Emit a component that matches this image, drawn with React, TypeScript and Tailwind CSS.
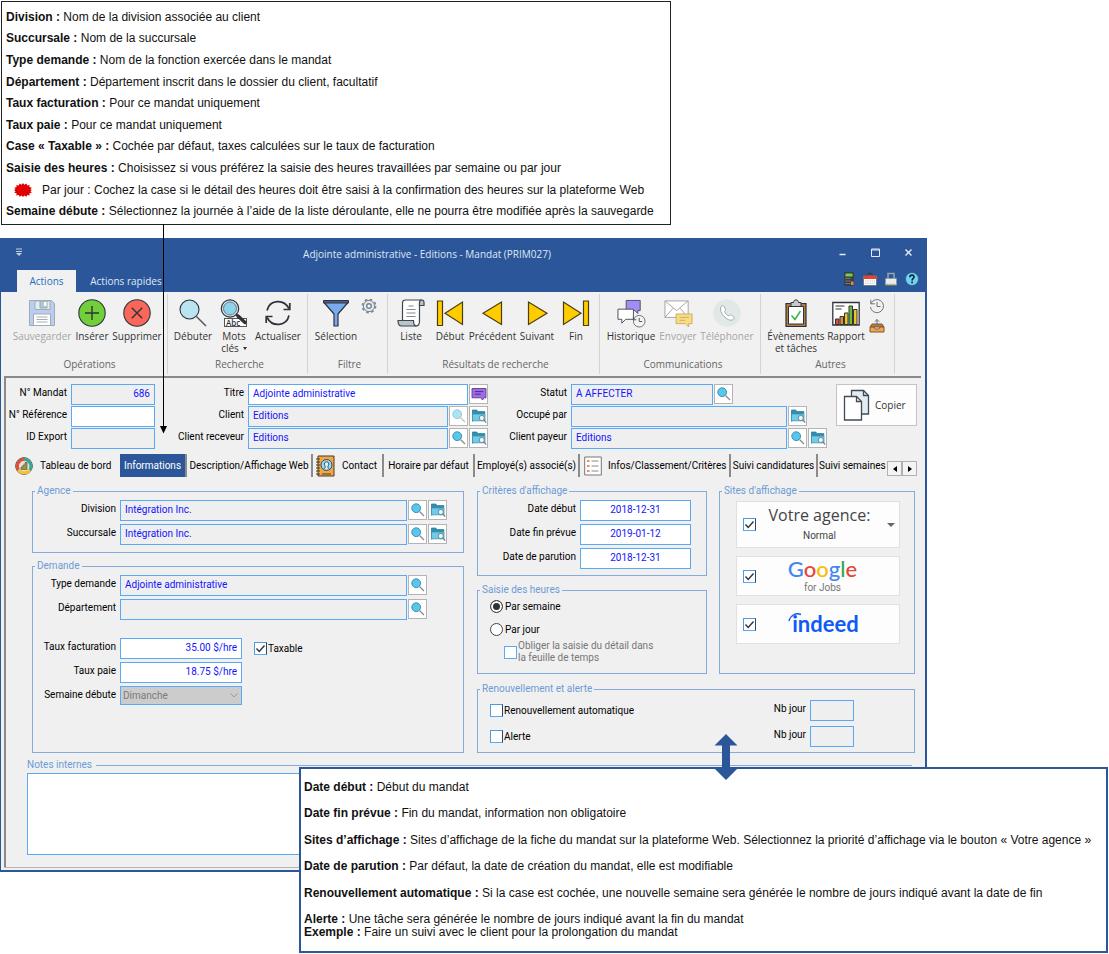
import React, { ReactNode } from "react";

/* ---------- Small icons ---------- */

function SearchIcon({ faded = false }: { faded?: boolean }) {
  return (
    <svg viewBox="0 0 16 16" className="size-4" fill="none" opacity={faded ? 0.5 : 1}>
      <path d="M9.5 9.5 14 14" stroke="#8a8a8a" strokeWidth="1.3" />
      <circle cx="6.2" cy="6.2" r="4.4" fill="#56c8ee" stroke="#4a8cab" strokeWidth="1" />
    </svg>
  );
}

function FolderIcon() {
  return (
    <svg viewBox="0 0 16 16" className="size-4" fill="none">
      <path d="M1.5 13.5V2h4.3l1 1.6h7v2.2" fill="#2f8fb0" stroke="#2b7f9c" strokeWidth=".8" />
      <path d="M1.5 12.8V6h12.5v6.8z" fill="#6fcdea" stroke="#3f93b0" strokeWidth=".8" />
      <circle cx="10.8" cy="10" r="2.6" fill="#e9f6fb" stroke="#6d7f88" strokeWidth=".9" />
      <path d="M12.7 11.900 15.200 14.600" stroke="#6d7f88" strokeWidth="1.2" />
    </svg>
  );
}

function ChatIcon() {
  return (
    <svg viewBox="0 0 16 16" className="size-4" fill="none">
      <path d="M1 2.5h14v9.3h-2L11.500 14 9.800 11.8H1z" fill="#a06be6" stroke="#5f3e94" strokeWidth=".9" />
      <path d="M3.8 5.6h8.4M3.8 8.2h6" stroke="#4c2f7c" strokeWidth="1" />
    </svg>
  );
}

/* ---------- Ribbon icons ---------- */

const ink = "#2f3338";

function SaveIcon() {
  return (
    <svg viewBox="0 0 28 28" className="size-7" fill="none">
      <path d="M1.5 1.5h22l3 3v22h-25z" fill="#b9cdf0" stroke="#a3aab5" />
      <path d="M7 2h15v8.5H7z" fill="#dff0f2" stroke="#a3aab5" />
      <path d="M12 2h7v7h-7z" fill="#a9cbd0" stroke="#a3aab5" />
      <rect x="16" y="3" width="2.5" height="4" fill="#fff" />
      <path d="M5.5 15h17v11.5h-17z" fill="#fff" stroke="#a3aab5" />
      <path d="M8.500 18h11M8.500 20.500h11M8.500 23h11" stroke="#a9adb3" />
    </svg>
  );
}

function RoundIcon({ kind }: { kind: "add" | "remove" }) {
  return (
    <svg viewBox="0 0 28 28" className="size-7" fill="none" stroke={ink} strokeWidth="1.1">
      <circle cx="14" cy="14" r="13.2" fill={kind === "add" ? "#71cf3a" : "#f7685b"} />
      {kind === "add" ? <path d="M14 7v14M7 14h14" strokeWidth="1.4" /> : <path d="m8.800 8.800 10.400 10.400M19.200 8.800 8.800 19.200" strokeWidth="1.4" />}
    </svg>
  );
}

function LookupIcon() {
  return (
    <svg viewBox="0 0 28 28" className="size-7" fill="none" stroke={ink}>
      <circle cx="10.500" cy="10.500" r="9.500" fill="#b9e4f0" strokeWidth="1.1" />
      <path d="m17.500 17.500 9.500 9.500" stroke="#4d5a66" strokeWidth="1.500" />
    </svg>
  );
}

function KeywordIcon() {
  return (
    <svg viewBox="0 0 28 28" className="size-7" fill="none" stroke={ink}>
      <circle cx="10" cy="9.500" r="8.700" fill="#dfe6ea" strokeWidth="1.200" />
      <circle cx="10" cy="9.500" r="6.500" fill="#8fd3ea" stroke="#5b7f92" />
      <path d="m16 15 3 3" strokeWidth="2" />
      <rect x="4.500" y="19.500" width="22" height="8" fill="#fff" stroke="#555" />
      <text x="6" y="26.800" fontSize="8" fontFamily="Open Sans, sans-serif" fontWeight="600" fill={ink} stroke="none">Abc</text>
      <path d="m18 17 7 6.500" strokeWidth="3.500" strokeLinecap="round" />
    </svg>
  );
}

function RefreshIcon() {
  return (
    <svg viewBox="0 0 28 28" className="size-7" fill="none" stroke={ink} strokeWidth="1.700">
      <path d="M3 11.500C5.500 .8 19.500-.8 25 9.500M25 16.500c-2.500 10.700-16.500 12.300-22 2" />
      <path d="M25.800 4v6.500h-6.300M2.200 24v-6.500h6.300" />
    </svg>
  );
}

function FunnelIcon() {
  return (
    <svg viewBox="0 0 28 28" className="size-7" fill="none" stroke={ink} strokeLinejoin="round">
      <path d="M2 3.500 12 15v12h4V15L26 3.500z" fill="#78aaf2" strokeWidth="1.200" />
      <path d="M1.500 1.500h25V4h-25z" fill="#4a6187" />
    </svg>
  );
}

function GearIcon() {
  return (
    <svg viewBox="0 0 16 16" className="size-4" fill="none" stroke="#7b868e">
      <circle cx="8" cy="8" r="6.500" strokeWidth="1.800" strokeDasharray="2.550 2.550" />
      <circle cx="8" cy="8" r="5.600" fill="#e3e9ec" />
      <circle cx="8" cy="8" r="2.300" fill="#f5f5f5" strokeWidth="1.500" />
    </svg>
  );
}

function ScrollIcon() {
  return (
    <svg viewBox="0 0 28 28" className="size-7" fill="none" stroke="#3d4850" strokeWidth="1.200">
      <path d="M5.500 21V4c0-2 1-3 3-3h16.500c-2 0-2.500 1-2.500 3v18c0 3-1 5-3.500 5z" fill="#fff" />
      <path d="M22.500 6.500H27V3.500c0-1.500-.8-2.500-2-2.500s-2.500 1-2.500 3z" fill="#b9c5cb" />
      <path d="M1 21.500h15.500c0 3 .5 5.500 3 5.500H4.500C2 27 1 25 1 21.500z" fill="#b9c5cb" />
      <path d="M11.500 7h5M9.500 10.500h9M9.500 14h9M9.500 17.500h9" stroke="#84898d" />
    </svg>
  );
}

function NavIcon({ kind }: { kind: "first" | "prev" | "next" | "last" }) {
  const flip = kind === "next" || kind === "last";
  const bar = kind === "first" || kind === "last";
  return (
    <svg viewBox="0 0 28 28" className="size-7" fill="#fc0" stroke="#4a3d10" strokeWidth="1.200">
      <g transform={flip ? "matrix(-1 0 0 1 28 0)" : undefined}>
        {bar && <path d="M1.500 2h5v24.500h-5z" />}
        <path d={bar ? "M9 14.200 26.500 3v22.500z" : "M4 14.200 22.500 3v22.500z"} />
      </g>
    </svg>
  );
}

function HistoryChatIcon() {
  return (
    <svg viewBox="0 0 30 30" className="size-[29px]" fill="none" stroke="#4b5158">
      <path d="M9.500 1.500H24V12h-2.500v3l-3-3h-9z" fill="#a58bf5" />
      <path d="M1 10.500h16V21H9l-4 4v-4H1z" fill="#fff" />
      <circle cx="23" cy="23" r="6" fill="#f4f4f4" stroke="#6c7278" />
      <path d="M23 19.500V23.300h3M17 18.500v3h3" />
    </svg>
  );
}

function MailIcon() {
  return (
    <svg viewBox="0 0 30 30" className="size-[29px]" fill="none" stroke="#a2a4a6">
      <path d="M1 2h24v17H1z" fill="#fff" />
      <path d="m1 2 12 10L25 2M1 19l8.500-9.500M25 19l-8.500-9.500" />
      <path d="M12.500 15.500H29v10h-3.500V29L22 25.500h-9.500z" fill="#fbdc86" stroke="#c8ad62" />
      <path d="M16 19h10M16 22h6" stroke="#c8ad62" />
    </svg>
  );
}

function PhoneIcon() {
  return (
    <svg viewBox="0 0 28 28" className="size-7" fill="none" stroke="#a5a8a8">
      <circle cx="14" cy="14" r="13.800" fill="#e1e9e8" stroke="none" />
      <path d="M8 7.500c1-1 2-1.500 3 0l1.500 2.500c.6 1-.3 1.700-1 2.300.5 2 2.500 4 4.400 4.600.700-.800 1.500-1.500 2.500-.8l2.200 1.700c1.200 1 .4 2.300-.7 3-4.900 2.700-14.800-7-11.900-13.300z" fill="#fff" />
    </svg>
  );
}

function ClipboardIcon() {
  return (
    <svg viewBox="0 0 28 28" className="size-7" fill="none" stroke={ink}>
      <path d="M4 4.500h20V27.500H4z" fill="#b07b40" strokeWidth="1.200" />
      <path d="M6.500 7.500h15v17.500h-15z" fill="#fff" />
      <path d="M9 3.500h2.500c0-3.500 5-3.500 5 0H19v4H9z" fill="#c5c9cc" />
      <path d="m9.500 16.500 3.500 4L18.500 12" stroke="#28b540" strokeWidth="1.400" />
    </svg>
  );
}

function ReportIcon() {
  return (
    <svg viewBox="0 0 28 28" className="size-7" fill="none" stroke={ink}>
      <path d="M.8 3.500h26.400V26H.8z" fill="#fff" strokeWidth="1.300" />
      <path d="M3.500 7h9M3.500 10h6" />
      <path d="M3.500 20H7v5.500H3.500z" fill="#e14a34" />
      <path d="M8 17.500h3.500v8H8z" fill="#ee8a2c" />
      <path d="M12.500 14H16v11.500h-3.500z" fill="#edc526" />
      <path d="M17 7h3.500v18.500H17z" fill="#69bf38" />
      <path d="M21.500 10.500H25v15h-3.500z" fill="#edc526" />
    </svg>
  );
}

function ClockBackIcon() {
  return (
    <svg viewBox="0 0 16 16" className="size-4" fill="none" stroke="#6d7276">
      <path d="M2 5.500a6.500 6.500 0 1 1-.5 3.500" />
      <path d="M1.800 1.800v4h4M8 4v4.500h3.500" />
    </svg>
  );
}

function TrayIcon() {
  return (
    <svg viewBox="0 0 16 16" className="size-4" fill="none" stroke="#7a5a33">
      <path d="m1 9 2-3h10l2 3z" fill="#b9803f" />
      <path d="M8 9V1.500M5.800 3.700 8 1.500l2.200 2.200" stroke="#6d7276" />
      <path d="M1 9h4l1.200 2h3.600L11 9h4v5H1z" fill="#f3a64d" />
    </svg>
  );
}

/* ---------- Ribbon ---------- */

function Tool({ icon, label, label2, disabled, className }: { icon: ReactNode; label: string; label2?: ReactNode; disabled?: boolean; className: string }) {
  return (
    <button disabled={disabled} className={`flex shrink-0 flex-col items-center pt-[5px] leading-3 whitespace-nowrap text-[#333] disabled:text-[#a5a5a5] ${className}`}>
      <span className="flex h-7 items-start">{icon}</span>
      <span className="pt-[3px]">{label}</span>
      {label2 && <span className="flex items-center gap-1">{label2}</span>}
    </button>
  );
}

function Group({ name, className, children }: { name: string; className: string; children: ReactNode }) {
  return (
    <section aria-label={name} className={`flex h-20 flex-col justify-between border-r border-[#d4d4d4] ${className}`}>
      <div className="flex items-start">{children}</div>
      <p className="pb-1 text-center leading-3 text-[#666]">{name}</p>
    </section>
  );
}

function Ribbon() {
  return (
    <div className="flex overflow-hidden bg-[#f1f1f1] px-1 pt-[2px] pb-[2px] font-['Open_Sans',sans-serif] text-[10px]">
      <Group name="Opérations" className="w-[163px] pl-[7px]">
        <Tool icon={<SaveIcon />} label="Sauvegarder" disabled className="w-[60px]" />
        <Tool icon={<RoundIcon kind="add" />} label="Insérer" className="w-10" />
        <Tool icon={<RoundIcon kind="remove" />} label="Supprimer" className="w-[50px]" />
      </Group>
      <Group name="Recherche" className="w-[140px] pl-1">
        <Tool icon={<LookupIcon />} label="Débuter" className="w-[42px]" />
        <Tool icon={<KeywordIcon />} label="Mots" label2={<>clés<svg viewBox="0 0 4 3" className="h-[3px] w-1" fill="#333"><path d="M0 0h4L2 3z" /></svg></>} className="w-10" />
        <Tool icon={<RefreshIcon />} label="Actualiser" className="w-12" />
      </Group>
      <Group name="Filtre" className="w-20 pl-1">
        <Tool icon={<FunnelIcon />} label="Sélection" className="w-12" />
        <button aria-label="Options du filtre" className="pt-1 pl-px"><GearIcon /></button>
      </Group>
      <Group name="Résultats de recherche" className="w-[212px] pl-1">
        <Tool icon={<ScrollIcon />} label="Liste" className="w-[38px]" />
        <Tool icon={<NavIcon kind="first" />} label="Début" className="w-10" />
        <Tool icon={<NavIcon kind="prev" />} label="Précédent" className="w-[45px]" />
        <Tool icon={<NavIcon kind="next" />} label="Suivant" className="w-11" />
        <Tool icon={<NavIcon kind="last" />} label="Fin" className="w-[34px]" />
      </Group>
      <Group name="Communications" className="w-[161px] pl-1.5">
        <Tool icon={<HistoryChatIcon />} label="Historique" className="w-[50px]" />
        <Tool icon={<MailIcon />} label="Envoyer" disabled className="w-11" />
        <Tool icon={<PhoneIcon />} label="Téléphoner" disabled className="w-[54px]" />
      </Group>
      <Group name="Autres" className="w-[134px] pl-1.5">
        <Tool icon={<ClipboardIcon />} label="Évènements" label2="et tâches" className="w-[58px]" />
        <Tool icon={<ReportIcon />} label="Rapport" className="w-[42px]" />
        <div className="flex flex-col gap-1 pt-1 pl-0.5">
          <button aria-label="Historique récent"><ClockBackIcon /></button>
          <button aria-label="Exporter"><TrayIcon /></button>
        </div>
      </Group>
    </div>
  );
}

function TitleBar() {
  return (
    <header className="bg-[#2b579a] font-['Open_Sans',sans-serif] text-[10px] text-[#dfe8f5]">
      <div className="flex h-[30px] items-center">
        <button aria-label="Personnaliser la barre" className="mb-1 w-[27px] pl-[15px]">
          <svg viewBox="0 0 6 8" className="h-2 w-1.5" fill="none" stroke="#c3cedf"><path d="M0 1h6M0 3.500h6" /><path d="M0 5h6L3 8z" fill="#c3cedf" stroke="none" /></svg>
        </button>
        <h1 className="flex-1 text-center">Adjointe administrative - Editions - Mandat (PRIM027)</h1>
        <div className="flex w-[99px] items-center gap-6 pb-1 pl-3">
          <button aria-label="Réduire"><svg viewBox="0 0 9 9" className="size-[9px]" stroke="#e6ecf5" strokeWidth="1.500"><path d="M1.500 6.500h6" /></svg></button>
          <button aria-label="Agrandir"><svg viewBox="0 0 9 9" className="size-[9px]" fill="none" stroke="#e6ecf5"><path d="M.5 1h8v7.500h-8zM.5 2h8" /></svg></button>
          <button aria-label="Fermer"><svg viewBox="0 0 9 9" className="size-[9px]" stroke="#e6ecf5" strokeWidth="1.400"><path d="m1.500 1.500 6 6m0-6-6 6" /></svg></button>
        </div>
      </div>
      <div className="flex h-[23px] items-end justify-between">
        <div className="flex">
          <button className="ml-4 h-[22px] w-[59px] bg-[#f1f1f1] text-[#1f6fc4]">Actions</button>
          <button className="w-[100px]">Actions rapides</button>
        </div>
        <div className="flex items-center gap-[7px] self-center pr-1.5 pb-1">
          <button aria-label="Calculatrice"><svg viewBox="0 0 14 14" className="size-3.5"><path d="M2 0h10v14H2z" fill="#3c3f44" /><path d="M3.500 1.500h7v3h-7z" fill="#6fd44f" /><path d="M3.500 6.500h5M3.500 9h5M3.500 11.500h5" stroke="#878c94" strokeDasharray="1.300 .5" /><path d="M9 9.500h2.500V13H9z" fill="#e08a3a" /></svg></button>
          <button aria-label="Calendrier"><svg viewBox="0 0 14 14" className="size-3.5" fill="none"><path d="M3.500 4 7 .8 10.500 4" stroke="#333" /><path d="M.5 4h13v9.500H.5z" fill="#fff" stroke="#555" strokeWidth=".6" /><path d="M.5 3.500h13v3.500H.5z" fill="#e2452f" /><path d="M2 9h10M2 11.300h10" stroke="#c9c9c9" strokeDasharray="1.500 .7" /></svg></button>
          <button aria-label="Verrouiller"><svg viewBox="0 0 14 14" className="size-3.5" fill="none"><path d="M4 7V1.500h6V7" stroke="#9aa3ad" strokeWidth="1.500" /><path d="M1.500 6.500h11V13h-11z" fill="#e9ecef" stroke="#8e949b" strokeWidth=".6" /><path d="M1.500 12.500h11" stroke="#c3a640" strokeWidth="1.500" strokeDasharray="1 .5" /></svg></button>
          <button aria-label="Aide"><svg viewBox="0 0 14 14" className="size-3.5" fill="none"><circle cx="7" cy="7" r="6.500" fill="#6fd3f5" stroke="#2d5f7a" strokeWidth=".7" /><path d="M4.800 5.200c.2-3 4.700-2.500 4.300 0-.2 1.300-2 1.400-2 3.300M7.100 9.600v1.700" stroke="#123" strokeWidth="1.600" /></svg></button>
        </div>
      </div>
    </header>
  );
}

/* ---------- Form parts ---------- */

type Picker = "search" | "faded" | "folder" | "chat";
const pickerNames: Record<Picker, string> = { search: "Rechercher", faded: "Rechercher", folder: "Ouvrir la fiche", chat: "Commentaires" };

function PickerButton({ kind, of }: { kind: Picker; of: string }) {
  return (
    <button aria-label={`${pickerNames[kind]} : ${of}`} disabled={kind === "faded"} className="ml-px flex h-5 w-[19px] shrink-0 items-center justify-center border border-[#b4b4b4] bg-white">
      {kind === "folder" ? <FolderIcon /> : kind === "chat" ? <ChatIcon /> : <SearchIcon faded={kind === "faded"} />}
    </button>
  );
}

function Field({ id, label, value = "", labelWidth, inputClass = "flex-1", editable = false, pickers = [], end = "" }: {
  id: string; label: string; value?: string; labelWidth: string; inputClass?: string; editable?: boolean; pickers?: Picker[]; end?: string;
}) {
  return (
    <div className={`flex items-start ${end}`}>
      <label htmlFor={id} className={`shrink-0 pr-1 text-right leading-[18px] whitespace-nowrap ${labelWidth}`}>{label}</label>
      <input id={id} defaultValue={value} readOnly={!editable} className={`h-[21px] min-w-0 border border-[#5aa9f5] px-1 pb-0.5 text-[#1414ff] outline-none ${editable ? "bg-white" : "bg-[#efefef]"} ${inputClass}`} />
      {pickers.map((p) => <PickerButton key={p} kind={p} of={label} />)}
    </div>
  );
}

function Check({ id, checked, dark = true }: { id: string; checked?: boolean; dark?: boolean }) {
  return (
    <span className="inline-grid shrink-0">
      <input id={id} type="checkbox" defaultChecked={checked} className={`peer size-[13px] appearance-none border bg-white [grid-area:1/1] ${dark ? "border-t-[#4f9be0] border-r-[#274870] border-b-[#5aa9f5] border-l-[#4f9be0]" : "border-[#5aa9f5]"}`} />
      <svg viewBox="0 0 13 13" className="pointer-events-none invisible size-[13px] [grid-area:1/1] peer-checked:visible" fill="none" stroke="#333" strokeWidth="1.400"><path d="m2.500 6.500 2.700 3L10.500 3.500" /></svg>
    </span>
  );
}

function Box({ title, className = "", children }: { title: string; className?: string; children: ReactNode }) {
  return (
    <fieldset className={`min-w-0 border border-[#83abdc] ${className}`}>
      <legend className="ml-[2px] px-[2px] leading-3 text-[#6c9bd6]">{title}</legend>
      {children}
    </fieldset>
  );
}

function RecordHeader() {
  return (
    <div className="flex items-start pt-1.5 pr-1">
      <div className="flex w-[149px] shrink-0 flex-col gap-px">
        <Field id="mandat" label="N° Mandat" value="686" labelWidth="w-[65px]" inputClass="flex-1 text-right" />
        <Field id="reference" label="N° Référence" labelWidth="w-[65px]" editable />
        <Field id="export" label="ID Export" labelWidth="w-[65px]" />
      </div>
      <div className="flex min-w-0 flex-[333] flex-col gap-px">
        <Field id="titre" label="Titre" value="Adjointe administrative" labelWidth="w-[93px]" editable pickers={["chat"]} />
        <Field id="client" label="Client" value="Editions" labelWidth="w-[93px]" pickers={["faded", "folder"]} />
        <Field id="receveur" label="Client receveur" value="Editions" labelWidth="w-[93px]" pickers={["search", "folder"]} />
      </div>
      <div className="flex min-w-0 flex-[339] flex-col gap-px">
        <Field id="statut" label="Statut" value="À AFFECTER" labelWidth="w-[83px]" inputClass="w-[142px]" pickers={["search"]} />
        <Field id="occupe" label="Occupé par" labelWidth="w-[83px]" pickers={["folder"]} end="pr-5" />
        <Field id="payeur" label="Client payeur" value="Editions" labelWidth="w-[83px]" pickers={["search", "folder"]} />
      </div>
      <button className="ml-[9px] flex h-[42px] w-[81px] shrink-0 items-center gap-1 border border-[#c4c4c4] bg-[#fdfdfd] pl-1.5 font-['Open_Sans',sans-serif] text-[#333]">
        <svg viewBox="0 0 28 32" className="h-8 w-7" fill="none" stroke="#414b55" strokeWidth="1.300">
          <path d="M8.500 1.500h12l5 5V25h-17z" fill="#e3edf1" /><path d="M20.500 1.500v5h5" />
          <path d="M1.500 7.500h12l5 5V31h-17z" fill="#fff" /><path d="M13.500 7.500v5h5" />
        </svg>
        Copier
      </button>
    </div>
  );
}

function Tabs() {
  const tab = "flex h-[23px] shrink-0 items-center border-r-2 border-[#8b8b8b] whitespace-nowrap";
  return (
    <nav className="mt-[5px] mr-1 ml-1.5 flex items-center pb-px">
      <div className="flex min-w-0 flex-1 overflow-hidden">
        <button className={`${tab} w-[108px] gap-[7px] border-transparent pl-[3px]`}>
          <svg viewBox="0 0 18 18" className="size-[18px]" fill="none">
            <circle cx="9" cy="9" r="8.300" fill="#e8e0d0" stroke="#444" />
            <path d="M3.500 13A7 7 0 0 1 9 2.300" stroke="#e04f3c" strokeWidth="3" /><path d="M9 2.300A7 7 0 0 1 14.800 13" stroke="#36a79d" strokeWidth="3" /><path d="M3.500 13a7 7 0 0 0 11.300 0" stroke="#f2c233" strokeWidth="3" />
            <path d="M6 12.500V10h2V8h2V5.500h2v7z" fill="#7da24a" stroke="#8d4b3c" strokeWidth=".7" />
          </svg>
          Tableau de bord
        </button>
        <button aria-current="page" className={`${tab} w-[67px] justify-center border-[#7b7b7b] bg-[#2b579a] text-white`}>Informations</button>
        <button className={`${tab} w-[126px] justify-center`}>Description/Affichage Web</button>
        <button className={`${tab} w-[71px] gap-[7px] pl-[2px]`}>
          <svg viewBox="0 0 20 22" className="h-[22px] w-5" fill="none">
            <path d="M3 1h16v20H3z" fill="#f3a646" stroke="#4b3a20" /><path d="M1 4h4M1 7h4M1 10h4M1 13h4M1 16h4M1 19h4" stroke="#4b3a20" />
            <circle cx="11.500" cy="10" r="5.500" fill="#9fdcf3" stroke="#2f4a5c" /><path d="M8.800 13.500c3-1 .5-2.500.5-4.500 0-3 4.500-3 4.500 0 0 2-2.500 3.500.5 4.500" stroke="#2f4a5c" fill="#d7f0fa" /><path d="M7 19h9" stroke="#4b3a20" />
          </svg>
          Contact
        </button>
        <button className={`${tab} w-[91px] justify-center`}>Horaire par défaut</button>
        <button className={`${tab} w-[105px] justify-center`}>Employé(s) associé(s)</button>
        <button className={`${tab} w-[151px] gap-1.5 pl-1`}>
          <svg viewBox="0 0 18 20" className="h-5 w-[18px]" fill="none"><path d="M.7 1h16.600v18H.7z" fill="#fff" stroke="#777" /><path d="M3 5h2.500M3 10h2.500M3 15h2.500" stroke="#ef8a62" strokeWidth="2" /><path d="M7.500 5h7M7.500 10h7M7.500 15h7" stroke="#888" /></svg>
          Infos/Classement/Critères
        </button>
        <button className={`${tab} w-[87px] justify-center`}>Suivi candidatures</button>
        <button className="flex h-[23px] flex-1 items-center pl-px whitespace-nowrap">Suivi semaines</button>
      </div>
      <button aria-label="Onglets précédents" className="mt-1.5 flex size-[15px] items-center justify-center border border-[#b0b0b0] bg-[#f4f4f4]"><svg viewBox="0 0 4 6" className="h-1.5 w-1"><path d="M4 0v6L0 3z" /></svg></button>
      <button aria-label="Onglets suivants" className="mt-1.5 flex size-[15px] items-center justify-center border border-[#b0b0b0] bg-[#f4f4f4]"><svg viewBox="0 0 4 6" className="h-1.5 w-1"><path d="M0 0v6l4-3z" /></svg></button>
    </nav>
  );
}

function LeftColumn() {
  return (
    <div className="flex min-w-0 flex-[432] flex-col gap-[7px]">
      <Box title="Agence" className="pb-[7px]">
        <div className="flex flex-col gap-[3px] pt-[3px] pr-4">
          <Field id="division" label="Division" value="Intégration Inc." labelWidth="w-[87px]" pickers={["search", "folder"]} />
          <Field id="succursale" label="Succursale" value="Intégration Inc." labelWidth="w-[87px]" pickers={["search", "folder"]} />
        </div>
      </Box>
      <Box title="Demande" className="flex-1">
        <div className="flex flex-col gap-[3px] pt-[3px] pr-9">
          <Field id="type" label="Type demande" value="Adjointe administrative" labelWidth="w-[87px]" pickers={["search"]} />
          <Field id="departement" label="Département" labelWidth="w-[87px]" pickers={["search"]} />
        </div>
        <div className="flex flex-col gap-[3px] pt-[18px]">
          <div className="flex items-center">
            <Field id="facturation" label="Taux facturation" value="35.00 $/hre" labelWidth="w-[87px]" inputClass="w-[122px] text-right" editable />
            <span className="ml-3 flex items-center gap-px"><Check id="taxable" checked /><label htmlFor="taxable">Taxable</label></span>
          </div>
          <Field id="paie" label="Taux paie" value="18.75 $/hre" labelWidth="w-[87px]" inputClass="w-[122px] text-right" editable />
          <div className="flex items-start">
            <label htmlFor="semaine" className="w-[87px] pr-1 text-right leading-[18px]">Semaine débute</label>
            <span className="inline-grid items-center">
              <select id="semaine" disabled className="h-[19px] w-[122px] appearance-none border border-[#5aa9f5] bg-[#cccccc] px-0.5 text-[#7b7b7b] opacity-100 [grid-area:1/1]"><option>Dimanche</option></select>
              <svg viewBox="0 0 8 5" className="mr-1 h-[5px] w-2 justify-self-end [grid-area:1/1]" fill="none" stroke="#999"><path d="m.5.5 3.500 3.500L7.500.5" /></svg>
            </span>
          </div>
        </div>
      </Box>
    </div>
  );
}

function Sites() {
  const card = "flex items-center border border-[#e0e0e0] bg-[#fdfdfd] pl-1.5";
  return (
    <Box title="Sites d'affichage" className="flex-[195]">
      <div className="flex flex-col gap-2 pt-1 pr-3.5 pl-4">
        <div className={`${card} h-[47px]`}>
          <Check id="agence" checked />
          <button aria-label="Priorité d'affichage" className="flex flex-1 items-center pr-1 whitespace-nowrap text-[#444]">
            <span className="flex-1 pr-1 text-center"><span className="block font-['Open_Sans',sans-serif] text-[16px] leading-5">Votre agence:</span><span className="block pt-[5px] pb-[3px] text-[10px] leading-3">Normal</span></span>
            <svg viewBox="0 0 8 4" className="h-1 w-2" fill="#666"><path d="M0 0h8L4 4z" /></svg>
          </button>
        </div>
        <div className={`${card} h-10`}>
          <Check id="google" checked />
          <label htmlFor="google" className="flex-1 pr-2.5 text-center">
            <span className="block font-['Lato',sans-serif] text-[22px] leading-5 font-medium"><span className="text-[#4285f4]">G</span><span className="text-[#ea4335]">o</span><span className="text-[#fbbc05]">o</span><span className="text-[#4285f4]">g</span><span className="text-[#34a853]">l</span><span className="text-[#ea4335]">e</span></span>
            <span className="block pt-[3px] text-[10px] leading-3 text-[#777]">for Jobs</span>
          </label>
        </div>
        <div className={`${card} h-10`}>
          <Check id="indeed" checked />
          <label htmlFor="indeed" className="relative flex-1 pr-1 text-center font-['Lato',sans-serif] text-[22px] leading-6 font-bold text-[#0f59f5]">
            indeed
            <svg viewBox="0 0 14 10" className="absolute top-0 left-8 h-2.5 w-3.5" fill="none" stroke="#0f59f5" strokeWidth="1.400"><path d="M1 9C2.500 3 8 .5 13 2.500" /></svg>
          </label>
        </div>
      </div>
    </Box>
  );
}

function RightColumn() {
  return (
    <div className="flex min-w-0 flex-[438] flex-col gap-[9px]">
      <div className="flex gap-3">
        <div className="flex min-w-0 flex-[231] flex-col gap-2">
          <Box title="Critères d'affichage" className="pb-1.5">
            <div className="flex flex-col gap-[3px] pt-[3px] pr-[15px]">
              <Field id="debut" label="Date début" value="2018-12-31" labelWidth="w-[102px]" inputClass="flex-1 text-center" editable />
              <Field id="fin" label="Date fin prévue" value="2019-01-12" labelWidth="w-[102px]" inputClass="flex-1 text-center" editable />
              <Field id="parution" label="Date de parution" value="2018-12-31" labelWidth="w-[102px]" inputClass="flex-1 text-center" editable />
            </div>
          </Box>
          <Box title="Saisie des heures" className="flex-1 pb-[9px]">
            <div className="flex flex-col gap-2.5 pt-1 pl-3">
              {[["semaine-h", "Par semaine"], ["jour-h", "Par jour"]].map(([id, label], i) => (
                <span key={id} className="flex h-[13px] items-center gap-[2px]">
                  <input id={id} type="radio" name="saisie" defaultChecked={i === 0} className="size-[13px] appearance-none rounded-full border border-[#444] bg-white checked:bg-[#333] checked:shadow-[inset_0_0_0_2px_white]" />
                  <label htmlFor={id}>{label}</label>
                </span>
              ))}
            </div>
            <div className="flex items-center gap-px pt-1 pl-[26px]">
              <Check id="detail" dark={false} />
              <label htmlFor="detail" className="leading-3 whitespace-nowrap text-[#777]">Obliger la saisie du détail dans<br />la feuille de temps</label>
            </div>
          </Box>
        </div>
        <Sites />
      </div>
      <Box title="Renouvellement et alerte" className="pb-[5px]">
        <div className="flex flex-col gap-[5px] pt-[5px] pr-[60px] pl-3">
          {[["renouvellement", "Renouvellement automatique"], ["alerte", "Alerte"]].map(([id, label]) => (
            <div key={id} className="flex items-center justify-between">
              <span className="flex items-center gap-px"><Check id={id} /><label htmlFor={id}>{label}</label></span>
              <Field id={`${id}-jours`} label="Nb jour" labelWidth="w-10" inputClass="w-11" />
            </div>
          ))}
        </div>
      </Box>
    </div>
  );
}

function Notes() {
  return (
    <div className="mt-1.5 mr-[9px] ml-[21px]">
      <div className="flex items-center gap-1">
        <label htmlFor="notes" className="leading-3 text-[#6c9bd6]">Notes internes</label>
        <span className="h-px flex-1 bg-[#83abdc]" />
      </div>
      <textarea id="notes" className="mt-0.5 block h-[82px] w-full resize-none border border-[#5aa9f5] bg-white outline-none" />
    </div>
  );
}

/* ---------- Explanatory notes ---------- */

const topNotes: [string, string][] = [
  ["Division :", "Nom de la division associée au client"],
  ["Succursale :", "Nom de la succursale"],
  ["Type demande :", "Nom de la fonction exercée dans le mandat"],
  ["Département :", "Département inscrit dans le dossier du client, facultatif"],
  ["Taux facturation :", "Pour ce mandat uniquement"],
  ["Taux paie :", "Pour ce mandat uniquement"],
  ["Case « Taxable » :", "Cochée par défaut, taxes calculées sur le taux de facturation"],
  ["Saisie des heures :", "Choisissez si vous préférez la saisie des heures travaillées par semaine ou par jour"],
  ["", "Par jour : Cochez la case si le détail des heures doit être saisi à la confirmation des heures sur la plateforme Web"],
  ["Semaine débute :", "Sélectionnez la journée à l’aide de la liste déroulante, elle ne pourra être modifiée après la sauvegarde"],
];

const bottomNotes: [string, string][][] = [
  [["Date début :", "Début du mandat"]],
  [["Date fin prévue :", "Fin du mandat, information non obligatoire"]],
  [["Sites d’affichage :", "Sites d’affichage de la fiche du mandat sur la plateforme Web. Sélectionnez la priorité d’affichage via le bouton « Votre agence »"]],
  [["Date de parution :", "Par défaut, la date de création du mandat, elle est modifiable"]],
  [["Renouvellement automatique :", "Si la case est cochée, une nouvelle semaine sera générée le nombre de jours indiqué avant la date de fin"]],
  [["Alerte :", "Une tâche sera générée le nombre de jours indiqué avant la fin du mandat"], ["Exemple :", "Faire un suivi avec le client pour la prolongation du mandat"]],
];

export default function App() {
  return (
    <main className="relative bg-white pt-px font-['Liberation_Sans',Arial,sans-serif] text-[12px] text-[#111]">
      <ul className="ml-px grid min-h-[224px] w-fit auto-rows-fr border border-[#222] pt-1 pr-4 pb-[2px] pl-1">
        {topNotes.map(([term, text], i) => (
          <li key={i} className="flex items-center">
            {term ? <p><b>{term}</b> {text}</p> : (
              <>
                <svg viewBox="0 0 18 14" className="mr-2.5 ml-2 h-3.5 w-[18px]" fill="#e00000">
                  <path d="M9 0l1.300 1.800L12.500.5l.6 2 2.600-.6-.4 2.200 2.500.7-1.400 1.700L18 7l-1.600 1.300 1.400 1.300-2.500.8.4 2-2.600-.5-.6 1.900-2.200-1.200L9 14l-1.300-1.400-2.200 1.200-.6-1.900-2.600.5.400-2-2.500-.8 1.400-1.300L0 7l1.600-.9L.2 4.800l2.500-.7-.4-2.200 2.600.6.6-2 2.200 1.300z" />
                </svg>
                <p>{text}</p>
              </>
            )}
          </li>
        ))}
      </ul>

      <div className="mt-[13px] mr-[182px] border border-r-2 border-b-2 border-[#2b579a] bg-[#f0f0f0] font-['Roboto',sans-serif] text-[10px] font-normal text-black">
        <TitleBar />
        <Ribbon />
        <div className="mr-1 ml-[3px] border-t-2 border-l-2 border-[#8a8a8a] pb-3">
          <RecordHeader />
          <Tabs />
          <div className="mr-1.5 ml-[26px] flex gap-[13px] pt-[7px]">
            <LeftColumn />
            <RightColumn />
          </div>
          <Notes />
        </div>
        <div className="mr-1 ml-[3px] h-[3px] border-t border-[#b5b5b5]" />
      </div>

      <div className="relative z-10 -mt-[105px] mr-px ml-[299px] flex min-h-[186px] flex-col justify-between border-2 border-[#2b579a] bg-white py-3 pr-2 pl-[3px] leading-[13px]">
        {bottomNotes.map((lines, i) => (
          <div key={i}>
            {lines.map(([term, text]) => <p key={term}><b>{term}</b> {text}</p>)}
          </div>
        ))}
      </div>

      <svg viewBox="0 0 9 210" className="pointer-events-none absolute top-[224px] left-[159px] z-10 h-[210px] w-[9px]">
        <path d="M4.500 0v204" stroke="#000" /><path d="M1 202h7l-3.500 7.500z" />
      </svg>
      <svg viewBox="0 0 24 46" className="pointer-events-none absolute top-[734px] right-[371px] z-20 h-[46px] w-6" fill="#2b579a">
        <path d="M12 0l11.500 11.500H16v23h7.500L12 46 .5 34.500H8v-23H.5z" />
      </svg>
    </main>
  );
}
